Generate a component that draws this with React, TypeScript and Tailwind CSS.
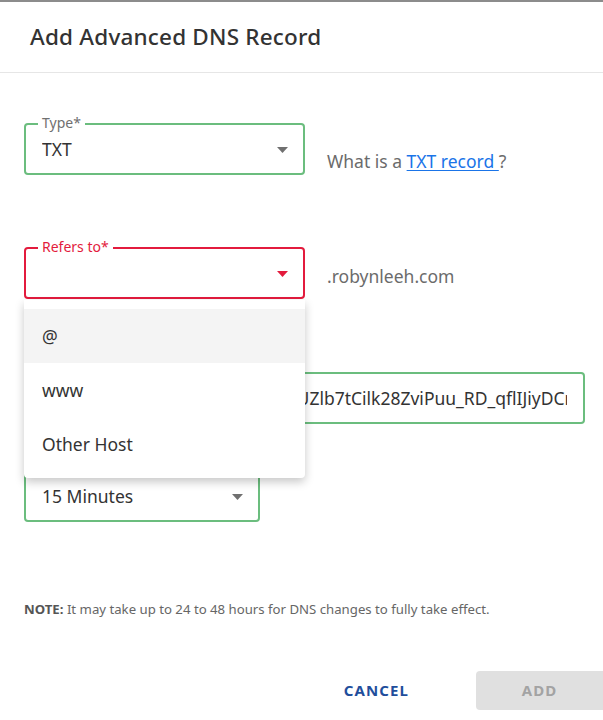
import React from 'react';

const Caret = ({ color }: { color: string }) => (
  <svg width="11" height="6" viewBox="0 0 11 6" className="shrink-0">
    <path d="M0 0h11L5.5 6z" fill={color} />
  </svg>
);

type FieldProps = {
  label?: string;
  value?: string;
  width: string;
  tone?: 'ok' | 'error';
  select?: boolean;
};

const Field = ({ label, value, width, tone = 'ok', select }: FieldProps) => {
  const error = tone === 'error';
  return (
    <div
      className={`relative h-[52px] shrink-0 rounded-[4px] border-2 flex items-center ${width} ${
        error ? 'border-[#e31b3d]' : 'border-[#6bbd7e]'
      }`}
    >
      {label && (
        <span
          className={`absolute -top-[11px] left-[12px] bg-white px-[4px] text-[14px] leading-[18px] ${
            error ? 'text-[#e31b3d]' : 'text-[#707070]'
          }`}
        >
          {label}
        </span>
      )}
      <div className="flex-1 min-w-0 overflow-hidden whitespace-nowrap ml-[16px] mr-[16px] text-[17.5px] text-[#333]">
        {value}
      </div>
      {select && (
        <div className="pr-[15px] pt-[1px]">
          <Caret color={error ? '#e31b3d' : '#707070'} />
        </div>
      )}
    </div>
  );
};

export default function App() {
  return (
    <div
      className="relative w-[603px] h-[720px] overflow-hidden bg-white border-t-2 border-[#8c8c8c]"
      style={{ fontFamily: '"Noto Sans", "Open Sans", sans-serif' }}
    >
      <div className="h-[71px] flex items-center pt-[0px] px-[30px] border-b border-[#e6e6e6]">
        <h1 className="text-[22.5px] font-medium text-[#333] tracking-[0.2px]">Add Advanced DNS Record</h1>
      </div>

      <div className="px-[24px]">
        <div className="mt-[50px] flex items-start">
          <Field label="Type*" value="TXT" width="w-[281px]" select />
          <p className="ml-[22px] mt-[25px] text-[17.5px] text-[#6b6b6b]">
            What is a{' '}
            <a className="text-[#1a74e8] underline underline-offset-2">TXT record </a>?
          </p>
        </div>

        <div className="mt-[72px] flex items-start">
          <Field label="Refers to*" width="w-[281px]" tone="error" select />
          <p className="ml-[22px] mt-[16px] text-[17.5px] text-[#6b6b6b]">.robynleeh.com</p>
        </div>

        <div className="mt-[73px]">
          <Field value="google-site-verification=NqKp3UZlb7tCilk28ZviPuu_RD_qflIJiyDCmX4w" width="w-[561px]" />
        </div>

        <div className="mt-[46px]">
          <Field value="15 Minutes" width="w-[236px]" select />
        </div>

        <p className="mt-[78px] text-[13.2px] leading-[18px] text-[#666]">
          <span className="font-bold text-[#555]">NOTE:</span> It may take up to 24 to 48 hours for DNS changes to
          fully take effect.
        </p>

        <div className="mt-[53px] flex items-center justify-end mr-[-24px]">
          <button className="text-[15px] font-bold tracking-[1.1px] text-[#1f4e9c]">CANCEL</button>
          <button className="ml-[67px] w-[127px] h-[39px] rounded-l-[4px] bg-[#e0e0e0] text-[15px] font-bold tracking-[1.1px] text-[#a3a3a3]">
            ADD
          </button>
        </div>
      </div>

      <div className="absolute left-[24px] top-[298px] w-[281px] bg-white rounded-b-[4px] pt-[9px] pb-[7px] shadow-[0_4px_10px_rgba(0,0,0,0.22)]">
        {['@', 'www', 'Other Host'].map((item, i) => (
          <div
            key={item}
            className={`h-[54px] flex items-center px-[18px] text-[17.5px] text-[#333] ${i === 0 ? 'bg-[#f4f4f4]' : ''}`}
          >
            {item}
          </div>
        ))}
      </div>
    </div>
  );
}
